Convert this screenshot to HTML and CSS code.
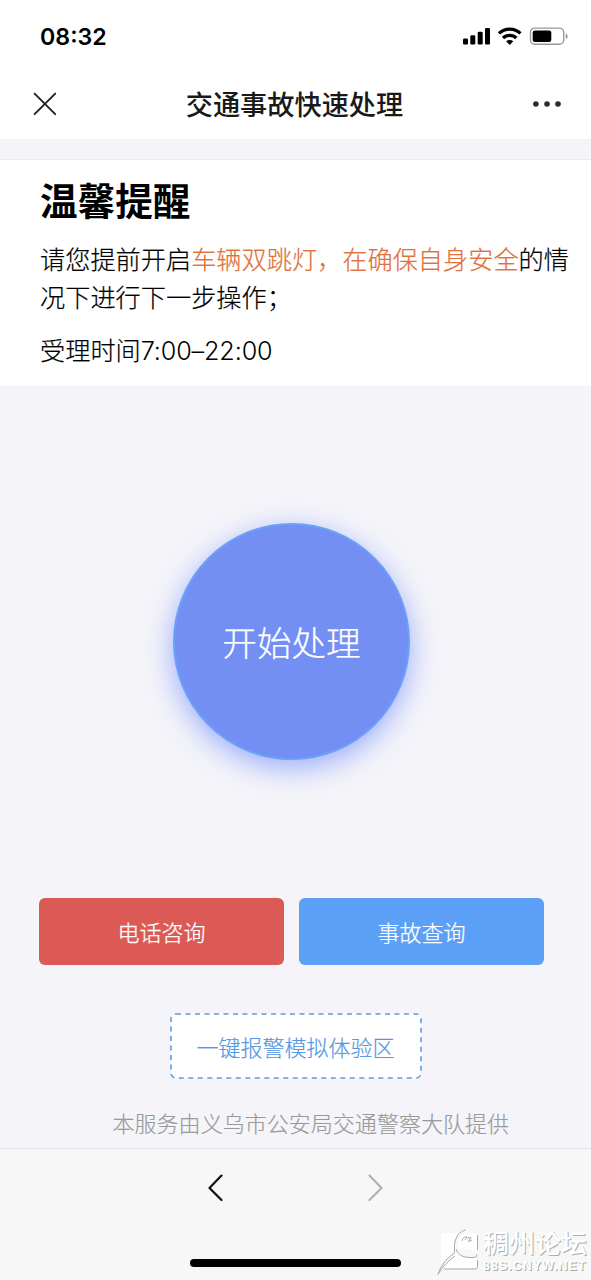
FILE: index.html
```html
<!DOCTYPE html>
<html lang="zh-CN">
<head>
<meta charset="utf-8">
<title>交通事故快速处理</title>
<link rel="stylesheet" href="styles.css">
</head>
<body>
<div class="screen">
  <header class="top">
    <div class="status">
      <span class="time">08:32</span>
      <svg class="status-icons" width="106" height="20" viewBox="0 0 106 20">
        <rect x="1" y="12.4" width="5" height="6.2" rx="1.3"/>
        <rect x="8.3" y="9.2" width="5" height="9.4" rx="1.3"/>
        <rect x="15.7" y="5.8" width="5" height="12.8" rx="1.3"/>
        <rect x="23" y="2" width="5" height="16.6" rx="1.3"/>
        <g fill="none" stroke="#000" stroke-width="3.3">
          <path d="M36.9 7.4a15.6 15.6 0 0 1 21.6 0"/>
          <path d="M41 12a9.6 9.6 0 0 1 13.4 0"/>
        </g>
        <path d="M44.1 15.3a5.3 5.3 0 0 1 7.2 0L47.7 18.9z"/>
        <rect x="68.5" y="2.1" width="33.2" height="16.1" rx="4.2" fill="none" stroke="#999" stroke-width="1.4"/>
        <rect x="70.7" y="4.4" width="18.6" height="11.6" rx="2.2"/>
        <path d="M103.7 7.2q2 1 2 3t-2 3z" fill="#999"/>
      </svg>
    </div>
    <nav class="nav">
      <svg class="close" width="24" height="24" viewBox="0 0 24 24"><path d="M1.6 1.6 22.2 22.2M22.2 1.6 1.6 22.2"/></svg>
      <h1 class="title">交通事故快速处理</h1>
      <svg class="more" width="28" height="6" viewBox="0 0 28 6"><circle cx="2.9" cy="3" r="2.8"/><circle cx="14" cy="3" r="2.8"/><circle cx="25" cy="3" r="2.8"/></svg>
    </nav>
  </header>
  <section class="notice">
    <h2 class="notice-title">温馨提醒</h2>
    <p class="notice-text">请您提前开启<em class="warn">车辆双跳灯，在确保自身安全</em>的情<br>况下进行下一步操作；</p>
    <p class="notice-text hours">受理时间<span class="digits">7:00–22:00</span></p>
  </section>
  <main class="main">
    <button class="start">开始处理</button>
    <div class="actions">
      <button class="btn call">电话咨询</button>
      <button class="btn query">事故查询</button>
    </div>
    <div class="demo">
      <svg class="demo-frame" width="252" height="66" viewBox="0 0 252 66"><rect x="1" y="1" width="250" height="64" rx="5"/></svg>
      <span class="demo-label">一键报警模拟体验区</span>
    </div>
    <p class="provider">本服务由义乌市公安局交通警察大队提供</p>
  </main>
  <footer class="toolbar">
    <div class="arrows">
      <svg class="back" width="16" height="28" viewBox="0 0 16 28"><path d="M14.5 1.6 2.5 14 14.5 26"/></svg>
      <svg class="forward" width="16" height="28" viewBox="0 0 16 28"><path d="M1.5 1.6 13.5 14 1.5 26"/></svg>
    </div>
    <div class="home"></div>
    <div class="watermark">
      <svg width="44" height="50" viewBox="0 0 44 50">
        <path class="plate" d="M6 4.5H21Q16 11 17 20V24Q9 30 4 36V6.5Q4 4.5 6 4.5ZM32 4.5H38Q40 4.5 40 6.5V24Q34 18 23 18.5Q19 20 20 22Q26 31 39 28L40 30V37.5Q40 39.5 38 39.5H7Q12 30 18 26Q17 12 23 6Z"/>
        <path class="body" d="M30 1.5Q18 5 18.5 17Q19 29 32 29Q40 29 40 25Q35 18 22 19Q19 7 30 1.5Z"/>
        <path class="shade" d="M29 .8Q21 3 19 10Q17 13 17.5 24Q6 31 .8 45.5Q8 34 18 27M7 40H38.5Q40.5 40 40.5 37.5V31M40.5 6V21M25 12Q26 7 30 8L28 11M30 9 34 8.5 31.5 12.5 35 11M19 20Q21 28 32 28.5Q42 29 39.5 25"/>
      </svg>
      <div class="forum">
        <span class="forum-name">稠州论坛</span>
        <span class="forum-url">88S.CNYW.NET</span>
      </div>
    </div>
  </footer>
</div>
</body>
</html>
```

FILE: styles.css
```css
* { box-sizing: border-box; }
body { margin: 0; font-family: "Noto Sans CJK SC", sans-serif; font-weight: 300; color: #000; }
h1, h2, p { margin: 0; }
button { border: 0; padding: 0 0 2px; font-family: inherit; font-weight: inherit; color: #fff; -webkit-text-stroke: .25px; }
svg { display: block; flex: none; }
.screen { width: 591px; height: 1280px; overflow: hidden; display: flex; flex-direction: column; background: #f4f4f9; }
.top { height: 139px; background: #fff; }
.status { height: 72px; padding: 0 23px 0 40px; display: flex; align-items: center; justify-content: space-between; }
.time { padding-top: 2px; font: 600 23.2px/28px Inter, sans-serif; }
.nav { height: 64px; padding: 0 30px 0 33px; display: flex; align-items: center; justify-content: space-between; }
.close { fill: none; stroke: #222; stroke-width: 1.9; stroke-linecap: round; }
.title { padding: 0 1px 2px 0; font-size: 27.2px; line-height: 40px; font-weight: 500; color: #191919; }
.more { fill: #2b2b2b; }
.notice { height: 227px; margin-top: 20px; padding: 11px 0 0 40px; background: #fff; border-top: 1px solid #ebebee; white-space: nowrap; }
.notice-title { font-size: 37.6px; line-height: 56px; font-weight: 700; }
.notice-text { margin-top: 12px; font-size: 25.2px; line-height: 38px; -webkit-text-stroke: .2px; }
.hours { margin-top: 15px; }
.digits { font-family: Inter, sans-serif; font-weight: 300; letter-spacing: -.15px; -webkit-text-stroke: 0; }
.warn { font-style: normal; color: #df713b; }
.main { height: 762px; padding-top: 137px; }
.start { display: block; width: 237px; height: 237px; margin-left: 173px; border: 2px solid #69a1f8; border-radius: 50%; background: #738ff4; box-shadow: 0 8px 28px rgba(80,115,255,.55); font-size: 34.6px; }
.actions { margin: 138px 0 0 39px; display: flex; gap: 15px; }
.btn { width: 245px; height: 67px; border-radius: 6px; font-size: 22px; }
.call { background: #dc5a55; }
.query { background: #5b9ff7; }
.demo { display: grid; place-items: center; width: 252px; height: 66px; margin: 48px 0 0 170px; }
.demo-frame, .demo-label { grid-area: 1 / 1; }
.demo-frame { fill: #fff; stroke: #5b9ce6; stroke-width: 1.6; stroke-dasharray: 5 4.5; }
.demo-label { padding: 0 1px 1px 0; font-size: 22px; line-height: 32px; color: #5497e4; -webkit-text-stroke: .2px; }
.provider { margin: 27px 0 0 112.5px; font-size: 22.04px; line-height: 32px; color: #999; white-space: nowrap; -webkit-text-stroke: .15px; }
.toolbar { height: 132px; position: relative; border-top: 1px solid #e0e0e6; background: #f7f7f7; }
.arrows { padding: 25px 207px 0; display: flex; justify-content: space-between; }
.back, .forward { fill: none; stroke: #111; stroke-width: 2.2; stroke-linecap: round; stroke-linejoin: round; }
.forward { stroke: #b2b2b2; }
.home { width: 211px; height: 8px; margin: 57px 0 0 190px; border-radius: 4px; background: #000; }
.watermark { position: absolute; right: 2px; bottom: 1px; display: flex; align-items: flex-start; width: 152px; gap: 2px; }
.plate { fill: #fff; }
.body { fill: #f7f7f7; stroke: #fff; stroke-width: 1; }
.shade { fill: none; stroke: #aaa; stroke-width: 1; }
.forum { display: flex; flex-direction: column; gap: 3px; margin-top: -2px; color: #fff; white-space: nowrap; text-shadow: 1px 1px 0 #b0b0b0; }
.forum-name { font-size: 26px; line-height: 30px; font-weight: 500; }
.forum-url { font: 700 12.4px/12px "Liberation Sans", sans-serif; letter-spacing: 1.05px; text-shadow: 1px 1px 0 #aaa; }
```
